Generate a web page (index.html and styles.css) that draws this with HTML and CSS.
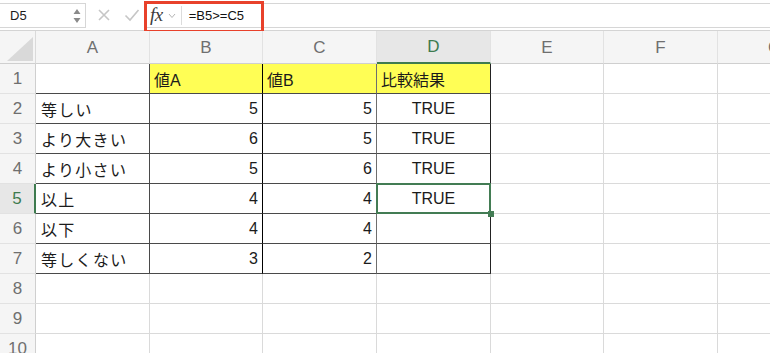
FILE: index.html
```html
<!DOCTYPE html>
<html lang="ja">
<head>
    <meta charset="UTF-8">
    <title>比較演算子 - Excel</title>
    <link rel="stylesheet" href="styles.css">
</head>
<body>
    <div class="toolbar">
        <div class="namebox">
            <span>D5</span>
            <svg class="spin" width="8" height="16" viewBox="0 0 8 16"><path d="M4 1 L7.5 6 L0.5 6 Z M4 15 L7.5 10 L0.5 10 Z" fill="#8a8a8a"/></svg>
        </div>
        <div class="actions">
            <svg width="14" height="14" viewBox="0 0 14 14"><path d="M2 2 L12 12 M12 2 L2 12" stroke="#c6c6c6" stroke-width="1.6" fill="none"/></svg>
            <svg width="16" height="14" viewBox="0 0 16 14"><path d="M1.5 7.5 L6 12 L14.5 2" stroke="#c6c6c6" stroke-width="1.6" fill="none"/></svg>
        </div>
        <div class="formula">
            <span class="fx">fx</span>
            <svg class="chev" width="8" height="6" viewBox="0 0 8 6"><path d="M1 1 L4 4.5 L7 1" stroke="#b5b5b5" stroke-width="1" fill="none"/></svg>
            <span class="sep"></span>
            <span class="expr">=B5&gt;=C5</span>
        </div>
        <div class="mark"></div>
    </div>

    <div class="sheet">
        <div class="row head">
            <div class="cell corner"><span class="tri"></span></div>
            <div class="cell ch">A</div>
            <div class="cell ch">B</div>
            <div class="cell ch">C</div>
            <div class="cell ch sel">D</div>
            <div class="cell ch">E</div>
            <div class="cell ch">F</div>
            <div class="cell ch">G</div>
            <div class="cell ch"></div>
        </div>
        <div class="row">
            <div class="cell rh">1</div>
            <div class="cell t"></div>
            <div class="cell t b yellow">値A</div>
            <div class="cell t c yellow">値B</div>
            <div class="cell t d yellow">比較結果</div>
            <div class="cell"></div>
            <div class="cell"></div>
            <div class="cell"></div>
            <div class="cell"></div>
        </div>
        <div class="row">
            <div class="cell rh">2</div>
            <div class="cell t jp">等しい</div>
            <div class="cell t b num">5</div>
            <div class="cell t c num">5</div>
            <div class="cell t d ctr">TRUE</div>
            <div class="cell"></div>
            <div class="cell"></div>
            <div class="cell"></div>
            <div class="cell"></div>
        </div>
        <div class="row">
            <div class="cell rh">3</div>
            <div class="cell t jp">より大きい</div>
            <div class="cell t b num">6</div>
            <div class="cell t c num">5</div>
            <div class="cell t d ctr">TRUE</div>
            <div class="cell"></div>
            <div class="cell"></div>
            <div class="cell"></div>
            <div class="cell"></div>
        </div>
        <div class="row">
            <div class="cell rh">4</div>
            <div class="cell t jp">より小さい</div>
            <div class="cell t b num">5</div>
            <div class="cell t c num">6</div>
            <div class="cell t d ctr">TRUE</div>
            <div class="cell"></div>
            <div class="cell"></div>
            <div class="cell"></div>
            <div class="cell"></div>
        </div>
        <div class="row">
            <div class="cell rh sel">5</div>
            <div class="cell t jp">以上</div>
            <div class="cell t b num">4</div>
            <div class="cell t c num">4</div>
            <div class="cell t d ctr active">TRUE</div>
            <div class="cell"></div>
            <div class="cell"></div>
            <div class="cell"></div>
            <div class="cell"></div>
        </div>
        <div class="row">
            <div class="cell rh">6</div>
            <div class="cell t jp">以下</div>
            <div class="cell t b num">4</div>
            <div class="cell t c num">4</div>
            <div class="cell t d ctr"></div>
            <div class="cell"></div>
            <div class="cell"></div>
            <div class="cell"></div>
            <div class="cell"></div>
        </div>
        <div class="row">
            <div class="cell rh">7</div>
            <div class="cell t jp">等しくない</div>
            <div class="cell t b num">3</div>
            <div class="cell t c num">2</div>
            <div class="cell t d ctr"></div>
            <div class="cell"></div>
            <div class="cell"></div>
            <div class="cell"></div>
            <div class="cell"></div>
        </div>
        <div class="row">
            <div class="cell rh">8</div>
            <div class="cell"></div><div class="cell"></div><div class="cell"></div><div class="cell"></div>
            <div class="cell"></div><div class="cell"></div><div class="cell"></div><div class="cell"></div>
        </div>
        <div class="row">
            <div class="cell rh">9</div>
            <div class="cell"></div><div class="cell"></div><div class="cell"></div><div class="cell"></div>
            <div class="cell"></div><div class="cell"></div><div class="cell"></div><div class="cell"></div>
        </div>
        <div class="row">
            <div class="cell rh">10</div>
            <div class="cell"></div><div class="cell"></div><div class="cell"></div><div class="cell"></div>
            <div class="cell"></div><div class="cell"></div><div class="cell"></div><div class="cell"></div>
        </div>
    </div>
</body>
</html>
```

FILE: styles.css
```css
body {
    margin: 0;
    padding: 0;
    background: #fff;
    font-family: "Liberation Sans", "Noto Sans CJK JP", sans-serif;
    color: #1b1b1b;
    overflow: hidden;
}

/* formula bar */
.toolbar { position: relative; display: flex; align-items: center; height: 31px; border-bottom: 1px solid #d4d4d4; box-sizing: border-box; }
.namebox { width: 86px; height: 25px; margin-top: 1px; box-sizing: border-box; border: 1px solid #d6d6d6; border-left: none; display: flex; align-items: center; justify-content: space-between; padding: 0 4px 0 10px; font-size: 13px; }
.actions { width: 58px; display: flex; align-items: center; gap: 13px; padding-left: 11px; box-sizing: border-box; }
.formula { flex: 1; height: 25px; margin-top: 1px; box-sizing: border-box; border-top: 1px solid #d6d6d6; border-bottom: 1px solid #d6d6d6; display: flex; align-items: center; padding-left: 6px; }
.fx { font-family: "Liberation Serif", serif; font-style: italic; font-size: 19px; color: #3c3c3c; letter-spacing: -0.5px; margin-top: -2px; }
.chev { margin-left: 5px; }
.sep { width: 1px; height: 19px; background: #dcdcdc; margin-left: 5px; }
.expr { font-size: 13px; margin-left: 7px; color: #111; }
.mark { position: absolute; left: 144px; top: 1px; width: 120px; height: 32px; box-sizing: border-box; border: 3px solid #e8412b; }

/* grid */
.sheet { overflow: hidden; }
.row { display: grid; grid-template-columns: 36px 114px 113px 114px 114px 113px 114px 114px 1fr; height: 30px; }
.row.head { height: 33px; }
.cell { box-sizing: border-box; border-right: 1px solid #dadada; border-bottom: 1px solid #dadada; display: flex; align-items: center; padding: 1px 4px 0 4px; font-size: 16px; white-space: nowrap; position: relative; }
.ch { background: #f5f5f5; color: #6f6f6f; justify-content: center; border-bottom-color: #cfcfcf; border-right-color: #e2e2e2; font-size: 17px; }
.ch.sel { background: #e7e7e7; color: #3e7b4f; border-bottom: 2px solid #3e7b4f; }
.corner { background: #f5f5f5; border-bottom-color: #cfcfcf; padding: 0; }
.tri { position: absolute; right: 2px; bottom: 2px; width: 26px; height: 24px; background: #d9d9d9; clip-path: polygon(100% 0, 100% 100%, 0 100%); }
.rh { background: #f5f5f5; color: #6f6f6f; justify-content: center; font-size: 17px; border-bottom-color: #e2e2e2; border-right-color: #cfcfcf; padding: 1px 0 0 0; }
.rh.sel { background: #e7e7e7; color: #3e7b4f; border-right: 2px solid #3e7b4f; }

.t { border-bottom-color: #4a4a4a; border-right-color: #4a4a4a; }
.t.b { border-right-color: #000; }
.t.c { border-right-color: #6e6e6e; }
.t.d { border-right-color: #222; }
.jp { letter-spacing: 1.3px; padding-left: 5px; }
.yellow { background: #fffe55; }
.num { justify-content: flex-end; }
.ctr { justify-content: center; }
.active::after { content: ""; position: absolute; left: -1px; top: -1px; right: -1px; bottom: -1px; border: 2px solid #437c54; }
.active::before { content: ""; position: absolute; right: -4px; bottom: -4px; width: 6px; height: 6px; background: #437c54; z-index: 2; }
```
